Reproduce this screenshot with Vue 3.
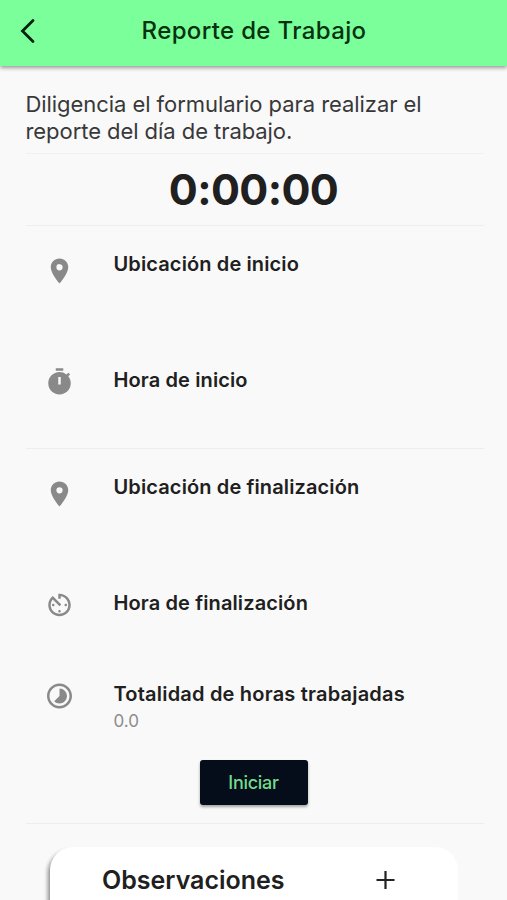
<script setup>
const icons = {
  pin: 'M12 2C8.13 2 5 5.13 5 9c0 5.25 7 13 7 13s7-7.75 7-13c0-3.87-3.13-7-7-7zm0 9.5a2.5 2.5 0 1 1 0-5 2.5 2.5 0 0 1 0 5z',
  timer: 'M15 1H9v2h6V1zm-4 13h2V8h-2v6zm8.03-6.61 1.42-1.42c-.43-.51-.9-.99-1.41-1.41l-1.42 1.42A8.962 8.962 0 0 0 12 4c-4.97 0-9 4.03-9 9s4.02 9 9 9 9-4.03 9-9c0-2.12-.74-4.07-1.97-5.61z',
  dial: 'M11 17c0 .55.45 1 1 1s1-.45 1-1-.45-1-1-1-1 .45-1 1zm0-14v4h2V5.08c3.39.49 6 3.39 6 6.92 0 3.87-3.13 7-7 7s-7-3.13-7-7c0-1.68.59-3.22 1.58-4.42L12 13l1.41-1.41-6.8-6.8v.02C4.42 6.45 3 9.05 3 12c0 4.97 4.02 9 9 9 4.97 0 9-4.03 9-9s-4.03-9-9-9h-1zm7 9c0-.55-.45-1-1-1s-1 .45-1 1 .45 1 1 1 1-.45 1-1zM6 12c0 .55.45 1 1 1s1-.45 1-1-.45-1-1-1-1 .45-1 1z',
  lapse: 'M16.24 7.76A5.974 5.974 0 0 0 12 6v6l-4.24 4.24c2.34 2.34 6.14 2.34 8.49 0a5.99 5.99 0 0 0-.01-8.48zM12 2C6.48 2 2 6.48 2 12s4.48 10 10 10 10-4.48 10-10S17.52 2 12 2zm0 18c-4.42 0-8-3.58-8-8s3.58-8 8-8 8 3.58 8 8-3.58 8-8 8z',
}
const start = [
  { icon: 'pin', title: 'Ubicación de inicio', kind: 'tall' },
  { icon: 'timer', title: 'Hora de inicio', kind: 'time' },
]
const end = [
  { icon: 'pin', title: 'Ubicación de finalización', kind: 'tall' },
  { icon: 'dial', title: 'Hora de finalización', kind: 'time compact' },
  { icon: 'lapse', title: 'Totalidad de horas trabajadas', kind: 'time compact total', value: '0.0' },
]
</script>

<template>
  <div class="screen">
    <header class="bar">
      <svg class="back" viewBox="0 0 16 26"><path d="M13 2.5 2.5 13 13 23.5" /></svg>
      <h1>Reporte de Trabajo</h1>
    </header>
    <main>
      <p class="intro">Diligencia el formulario para realizar el<br />reporte del día de trabajo.</p>
      <div class="clock"><span>0:00:00</span></div>
      <section class="group">
        <div v-for="r in start" :key="r.title" class="row" :class="r.kind">
          <svg class="icon" viewBox="-0.4 0 24 24"><path :d="icons[r.icon]" /></svg>
          <div class="text"><h2>{{ r.title }}</h2></div>
        </div>
      </section>
      <section class="group last">
        <div v-for="r in end" :key="r.title" class="row" :class="r.kind">
          <svg class="icon" viewBox="-0.4 0 24 24"><path :d="icons[r.icon]" /></svg>
          <div class="text">
            <h2>{{ r.title }}</h2>
            <p v-if="r.value" class="value">{{ r.value }}</p>
          </div>
        </div>
        <button class="go">Iniciar</button>
      </section>
      <section class="card">
        <h3>Observaciones</h3>
        <svg class="plus" viewBox="0 0 20 20"><path d="M10.5 1v18M1.5 10h18" /></svg>
      </section>
    </main>
  </div>
</template>

<style>
body { margin: 0; background: #f9f9f9; overflow: hidden; }
</style>

<style scoped>
.screen {
  height: 900px;
  overflow: hidden;
  display: flex;
  flex-direction: column;
  background: #f9f9f9;
  color: #202020;
  font-family: Inter, "Liberation Sans", sans-serif;
}
h1, h2, h3, p { margin: 0; }
.bar {
  flex: none;
  height: 66px;
  box-sizing: border-box;
  padding: 0 19px 5px 20px;
  display: grid;
  grid-template-columns: 16px 1fr 16px;
  align-items: center;
  background: #7aff9a;
  box-shadow: 0 2px 4px rgba(0, 0, 0, 0.38);
}
.back { width: 16px; height: 26px; }
.back path { fill: none; stroke: #06210d; stroke-width: 2.8; stroke-linecap: round; }
h1 {
  text-align: center;
  font-size: 24px;
  line-height: 30px;
  font-weight: 500;
  letter-spacing: 0.35px;
  color: #06320f;
}
main { padding: 0 23px 0 26px; }
.intro {
  height: 88px;
  box-sizing: border-box;
  padding-top: 25px;
  margin-left: -0.5px;
  font-size: 22px;
  line-height: 26.5px;
  letter-spacing: -0.06px;
  color: #383838;
  white-space: nowrap;
  border-bottom: 1px solid #f1f1f1;
}
.clock {
  height: 72px;
  box-sizing: border-box;
  display: flex;
  align-items: center;
  justify-content: center;
  padding: 0 3px 1px 0;
  border-bottom: 1px solid #eee;
  font-size: 43px;
  font-weight: 650;
  letter-spacing: -0.6px;
  line-height: 52px;
}
.group { border-bottom: 1px solid #eee; }
.row { height: 111px; display: flex; align-items: flex-start; gap: 39.5px; padding-left: 18px; box-sizing: border-box; }
.icon { width: 30px; height: 30px; margin-top: 30px; fill: #898989; fill-rule: evenodd; flex: none; }
.text { padding-top: 26px; }
.time .text { padding-top: 31px; }
.compact { height: 91px; }
h2 { font-size: 20px; line-height: 24px; font-weight: 600; letter-spacing: 0.12px; white-space: nowrap; }
.total h2 { letter-spacing: 0.2px; }
.value { margin-top: 4px; font-size: 17px; line-height: 22px; color: #8c8c8c; }
.last { height: 375px; box-sizing: border-box; display: flex; flex-direction: column; }
.go {
  align-self: center;
  width: 108px;
  height: 45px;
  margin: 18px 3px 0 0;
  padding: 0;
  border: 0;
  border-radius: 3px;
  background: #050d1a;
  color: #72dc8c;
  font: 500 18px/24px Inter, "Liberation Sans", sans-serif;
  letter-spacing: -0.3px;
  box-shadow: 0 2px 3px rgba(0, 0, 0, 0.35);
}
.card {
  height: 180px;
  box-sizing: border-box;
  margin: 23px 26px 0 24px;
  padding: 16px 63px 0 52px;
  display: flex;
  justify-content: space-between;
  align-items: flex-start;
  border-radius: 23px;
  background: #fff;
  box-shadow: -3px 3px 4px -1px rgba(0, 0, 0, 0.45);
}
h3 { font-size: 25px; line-height: 34px; font-weight: 600; }
.plus { width: 20px; height: 20px; margin-top: 7px; }
.plus path { fill: none; stroke: #222; stroke-width: 2.2; }
</style>
